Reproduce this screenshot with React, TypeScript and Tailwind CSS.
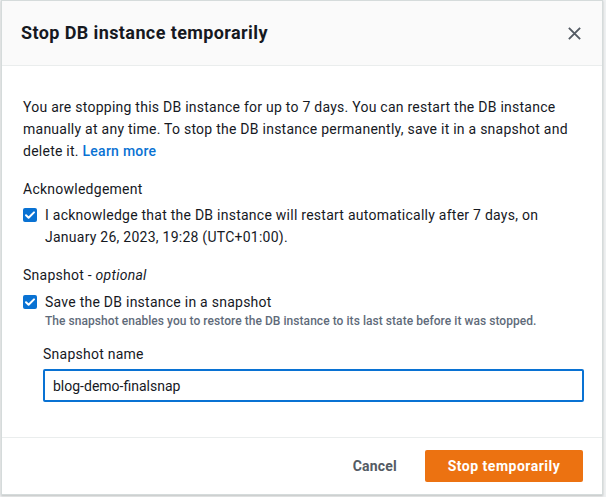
import { useState } from 'react';

function CheckIcon() {
  return (
    <span className="mt-[4px] flex h-[14px] w-[14px] shrink-0 items-center justify-center rounded-[2px] bg-[#0972d3]">
      <svg viewBox="0 0 14 14" className="h-[14px] w-[14px]" fill="none">
        <path d="M3 7.2l2.6 2.6L11 4.4" stroke="white" strokeWidth="2" strokeLinecap="round" strokeLinejoin="round" />
      </svg>
    </span>
  );
}

export default function App() {
  const [name, setName] = useState('blog-demo-finalsnap');

  return (
    <div className="h-[497px] w-[606px] bg-[#eef0f1] font-['Roboto',sans-serif] text-[14px] leading-[22px] tracking-[0.25px] text-[#16191f]">
      <div className="ml-[1px] flex h-[495px] w-[602px] flex-col border border-[#d5dbdb] bg-white shadow-[0_1px_2px_rgba(0,0,0,0.2)]">
        {/* header */}
        <div className="flex h-[65px] shrink-0 items-center justify-between border-b border-[#eaeded] bg-[#fafafa] pl-[19px] pr-[20px]">
          <h2 className="text-[18px] font-bold leading-[22px] tracking-[0.4px] text-[#16191f]">Stop DB instance temporarily</h2>
          <svg viewBox="0 0 16 16" className="h-[15px] w-[15px]" fill="none">
            <path d="M2 2l12 12M14 2L2 14" stroke="#545b64" strokeWidth="2" />
          </svg>
        </div>

        {/* body */}
        <div className="flex flex-1 flex-col px-[21px] pt-[30px]">
          <p>
            You are stopping this DB instance for up to 7 days. You can restart the DB instance manually at any time. To
            stop the DB instance permanently, save it in a snapshot and delete it.{' '}
            <a className="font-medium text-[#0972d3]">Learn more</a>
          </p>

          <div className="mt-[16px]">Acknowledgement</div>
          <div className="mt-[4px] flex gap-[8px]">
            <CheckIcon />
            <span>I acknowledge that the DB instance will restart automatically after 7 days, on January 26, 2023, 19:28 (UTC+01:00).</span>
          </div>

          <div className="mt-[16px]">
            Snapshot - <i>optional</i>
          </div>
          <div className="mt-[5px] flex gap-[8px]">
            <CheckIcon />
            <div>
              <div>Save the DB instance in a snapshot</div>
              <div className="text-[12px] font-medium leading-[16px] tracking-[0.05px] text-[#5f6b7a]">
                The snapshot enables you to restore the DB instance to its last state before it was stopped.
              </div>
            </div>
          </div>

          <div className="ml-[20px] mt-[14px] flex flex-col">
            <label>Snapshot name</label>
            <input
              value={name}
              onChange={(e) => setName(e.target.value)}
              className="mt-[4px] h-[33px] w-[541px] rounded-[2px] border-2 border-[#0972d3] px-[8px] text-[14px] tracking-normal text-[#16191f] outline-none"
            />
          </div>
        </div>

        {/* footer */}
        <div className="flex h-[57px] shrink-0 items-center justify-end gap-[28px] border-t border-[#eaeded] pr-[19px]">
          <button className="text-[14px] font-bold tracking-[0.2px] text-[#545b64]">Cancel</button>
          <button className="h-[32px] w-[158px] rounded-[2px] bg-[#ec7211] text-[14px] font-bold tracking-[0.5px] text-white">Stop temporarily</button>
        </div>
      </div>
    </div>
  );
}
